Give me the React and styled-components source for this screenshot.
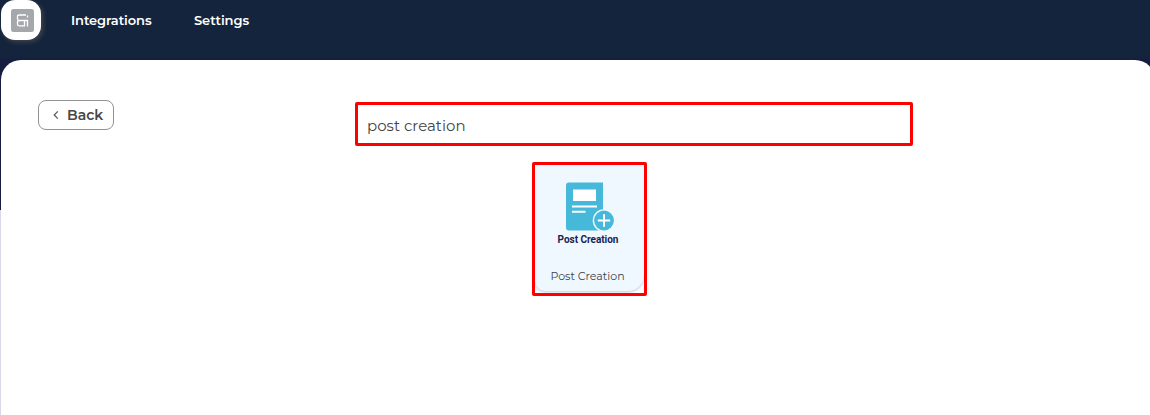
import React from "react";
import styled, { createGlobalStyle } from "styled-components";

const GlobalStyle = createGlobalStyle`
  * { box-sizing: border-box; }
  html, body { margin: 0; height: 100%; overflow: hidden; }
  body { background: #d9d8e8; font-family: Montserrat, Inter, "Open Sans", sans-serif; }
  #root { height: 100%; }
`;

const Page = styled.div`
  height: 100%;
  min-height: 415px;
  display: flex;
  flex-direction: column;
  padding-left: 1px;
  overflow: hidden;
  background: linear-gradient(#14243c 0 56px, #161d40 60px 210px, #d9d8e8 210px);
`;

const Header = styled.header`
  flex: 0 0 60px;
  display: flex;
  align-items: flex-start;
`;

const LogoTile = styled.a`
  width: 40px;
  height: 40px;
  border-radius: 14px;
  display: grid;
  place-items: center;
  padding: 1px 0 0 3px;
  background: #fff;
  box-shadow: 2px 2px 5px rgba(170, 150, 120, 0.3);
`;

const Nav = styled.nav`
  display: flex;
  gap: 42px;
  margin-left: 30px;
`;

const NavLink = styled.a`
  width: ${(p) => p.$width}px;
  line-height: 40px;
  font-size: 13px;
  font-weight: 600;
  letter-spacing: ${(p) => p.$spacing}px;
  color: #fff;
  white-space: nowrap;
`;

const Panel = styled.main`
  flex: 1;
  width: 1154px;
  display: flex;
  align-items: flex-start;
  padding: 40px 37px;
  border-radius: 20px 20px 0 0;
  background: #fff;
`;

const BackButton = styled.button`
  width: 76px;
  height: 30px;
  display: flex;
  align-items: center;
  gap: 8px;
  padding: 0 0 0 14px;
  border: 1px solid #929292;
  border-radius: 8px;
  background: #fff;
  color: #474747;
  font: 600 14px/28px Montserrat, Inter, sans-serif;
`;

const Results = styled.section`
  width: 558px;
  margin: 2px 0 0 241px;
  display: flex;
  flex-direction: column;
  align-items: center;
  gap: 16px;
`;

const SearchField = styled.div`
  width: 100%;
  height: 44px;
  padding: 1px 9px 0;
  border: 3px solid #fe0000;
  border-radius: 2px;
  color: #434343;
  font-size: 15px;
  font-weight: 400;
  line-height: 40px;
`;

const Highlight = styled.div`
  width: 115px;
  height: 134px;
  margin-right: 89px;
  border: 3px solid #fe0000;
  border-radius: 2px;
  overflow: hidden;
`;

const AppCard = styled.article`
  width: 109px;
  height: 126px;
  display: flex;
  flex-direction: column;
  align-items: center;
  padding: 16px 4px 0 0;
  border-radius: 0 0 16px 10px;
  background: #eff7ff;
  box-shadow: 0 1px 3px rgba(90, 110, 180, 0.4);
`;

const Artwork = styled.div`
  display: flex;
  flex-direction: column;
  align-items: center;
  padding-left: 1px;

  svg { margin-left: 5px; }
`;

const BrandName = styled.strong`
  margin-top: 1px;
  color: #17234f;
  font: 700 10px/13px Roboto, sans-serif;
  letter-spacing: -0.02px;
  white-space: nowrap;
`;

const CardTitle = styled.span`
  margin-top: 22px;
  color: #3c424b;
  font-size: 11px;
  line-height: 16px;
  white-space: nowrap;
`;

const Logo = () => (
  <svg width="23" height="23" viewBox="0 0 23 23" fill="none">
    <rect width="23" height="23" rx="2.5" fill="#a5a8aa" />
    <path
      d="M15 6H8.2Q6.5 6 6.5 7.2V10Q6.5 11.5 8.5 11.5H16.5V17.5M8.5 11.5Q6.5 11.5 6.5 13V15.3Q6.5 16.8 8.2 16.8H13.5V11.5M16.5 6.5V8.5"
      stroke="#fff"
      strokeWidth="1.3"
    />
  </svg>
);

const Chevron = () => (
  <svg width="6" height="10" viewBox="0 0 6 10" fill="none">
    <path d="M4.8 1.3 1.2 5l3.6 3.7" stroke="#555" strokeWidth="1.2" />
  </svg>
);

const PostIcon = () => (
  <svg width="50" height="51" viewBox="0 0 50 51" fill="none">
    <path d="M4 1.5H38V49.5H4Q1 49.5 1 46.5V4.5Q1 1.5 4 1.5Z" fill="#46b9da" />
    <path d="M8 8.5H31V20H8ZM7 24.5H32V26.5H7ZM7 29.8H20.5V31.7H7Z" fill="#fff" />
    <circle cx="39" cy="39.5" r="11.3" fill="#eff7ff" />
    <circle cx="39" cy="39.5" r="9.9" fill="#46b9da" />
    <path d="M39 33.3V45.7M32.8 39.5H45.2" stroke="#fff" strokeWidth="2" />
  </svg>
);

export default function App() {
  return (
    <>
      <GlobalStyle />
      <Page>
        <Header>
          <LogoTile><Logo /></LogoTile>
          <Nav>
            <NavLink $width={81} $spacing={-0.08}>Integrations</NavLink>
            <NavLink $width={55} $spacing={-0.06}>Settings</NavLink>
          </Nav>
        </Header>
        <Panel>
          <BackButton><Chevron />Back</BackButton>
          <Results>
            <SearchField>post creation</SearchField>
            <Highlight>
              <AppCard>
                <Artwork>
                  <PostIcon />
                  <BrandName>Post Creation</BrandName>
                </Artwork>
                <CardTitle>Post Creation</CardTitle>
              </AppCard>
            </Highlight>
          </Results>
        </Panel>
      </Page>
    </>
  );
}
